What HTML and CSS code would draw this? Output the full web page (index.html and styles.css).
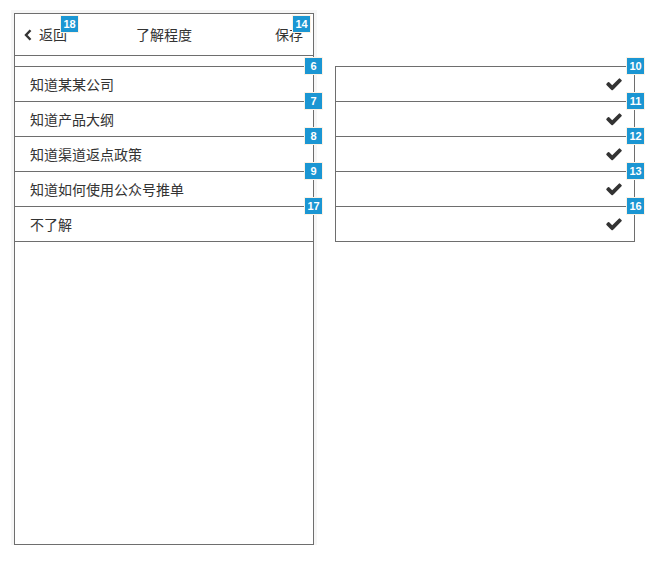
FILE: index.html
```html
<!DOCTYPE html>
<html lang="zh">
<head>
<meta charset="utf-8">
<link rel="stylesheet" href="styles.css">
</head>
<body>
<div class="stage">
  <div class="phone">
    <div class="header">
      <div class="back">
        <svg class="chev" viewBox="0 0 8 12" width="8" height="12"><polyline points="6.5,1.2 2,6 6.5,10.8" fill="none" stroke="#333" stroke-width="2.4"/></svg>
        <span class="tag">返回<span class="badge b-back">18</span></span>
      </div>
      <div class="title">了解程度</div>
      <div class="save"><span class="tag">保存<span class="badge b-save">14</span></span></div>
    </div>
    <ul class="list">
      <li class="row"><span>知道某某公司</span><span class="badge b-row">6</span></li>
      <li class="row"><span>知道产品大纲</span><span class="badge b-row">7</span></li>
      <li class="row"><span>知道渠道返点政策</span><span class="badge b-row">8</span></li>
      <li class="row"><span>知道如何使用公众号推单</span><span class="badge b-row">9</span></li>
      <li class="row"><span>不了解</span><span class="badge b-row">17</span></li>
    </ul>
  </div>
  <ul class="checks">
    <li class="crow"><svg class="check" viewBox="0 0 1792 1792" width="18" height="18"><path d="M1671 566q0 40-28 68l-724 724-136 136q-28 28-68 28t-68-28l-136-136-362-362q-28-28-28-68t28-68l136-136q28-28 68-28t68 28l294 295 656-657q28-28 68-28t68 28l136 136q28 28 28 68z" fill="#333"/></svg><span class="badge b-crow">10</span></li>
    <li class="crow"><svg class="check" viewBox="0 0 1792 1792" width="18" height="18"><path d="M1671 566q0 40-28 68l-724 724-136 136q-28 28-68 28t-68-28l-136-136-362-362q-28-28-28-68t28-68l136-136q28-28 68-28t68 28l294 295 656-657q28-28 68-28t68 28l136 136q28 28 28 68z" fill="#333"/></svg><span class="badge b-crow">11</span></li>
    <li class="crow"><svg class="check" viewBox="0 0 1792 1792" width="18" height="18"><path d="M1671 566q0 40-28 68l-724 724-136 136q-28 28-68 28t-68-28l-136-136-362-362q-28-28-28-68t28-68l136-136q28-28 68-28t68 28l294 295 656-657q28-28 68-28t68 28l136 136q28 28 28 68z" fill="#333"/></svg><span class="badge b-crow">12</span></li>
    <li class="crow"><svg class="check" viewBox="0 0 1792 1792" width="18" height="18"><path d="M1671 566q0 40-28 68l-724 724-136 136q-28 28-68 28t-68-28l-136-136-362-362q-28-28-28-68t28-68l136-136q28-28 68-28t68 28l294 295 656-657q28-28 68-28t68 28l136 136q28 28 28 68z" fill="#333"/></svg><span class="badge b-crow">13</span></li>
    <li class="crow"><svg class="check" viewBox="0 0 1792 1792" width="18" height="18"><path d="M1671 566q0 40-28 68l-724 724-136 136q-28 28-68 28t-68-28l-136-136-362-362q-28-28-28-68t28-68l136-136q28-28 68-28t68 28l294 295 656-657q28-28 68-28t68 28l136 136q28 28 28 68z" fill="#333"/></svg><span class="badge b-crow">16</span></li>
  </ul>
</div>
</body>
</html>
```

FILE: styles.css
```css
* { box-sizing: border-box; }
html, body { margin: 0; padding: 0; background: #fff; }
body {
  font-family: "Noto Sans CJK SC", "Liberation Sans", sans-serif;
  font-size: 14px;
  color: #333;
}
.stage {
  display: flex;
  align-items: flex-start;
  gap: 21px;
  padding: 13px 0 0 14px;
}
.phone {
  position: relative;
  width: 300px;
  height: 532px;
  border: 1px solid #6e6e6e;
  box-shadow: 0 0 0 3px #f6f6f6;
}
.header {
  position: relative;
  height: 42px;
  border-bottom: 1px solid #6e6e6e;
  display: flex;
  align-items: center;
  justify-content: space-between;
  padding: 0 10px 2px 9px;
}
.back {
  display: flex;
  align-items: center;
  gap: 7px;
}
.chev { display: block; margin-top: 2px; }
.tag { position: relative; line-height: 20px; }
.title {
  position: absolute;
  left: 0;
  right: 0;
  top: 10px;
  text-align: center;
  line-height: 20px;
}
.save { position: relative; }
.list {
  list-style: none;
  margin: 10px 0 0 0;
  padding: 0;
  border-top: 1px solid #6e6e6e;
}
.row {
  position: relative;
  height: 35px;
  border-bottom: 1px solid #6e6e6e;
  display: flex;
  align-items: center;
  padding-left: 15px;
}
.checks {
  list-style: none;
  margin: 53px 0 0 0;
  padding: 0;
  width: 300px;
  border: 1px solid #6e6e6e;
}
.crow {
  position: relative;
  height: 35px;
  border-bottom: 1px solid #6e6e6e;
  display: flex;
  align-items: center;
  justify-content: flex-end;
  padding-right: 11px;
}
.crow:last-child { height: 34px; border-bottom: 0; }
.check { display: block; }
.badge {
  position: absolute;
  width: 17px;
  height: 16px;
  background: #1b96d3;
  color: #fff;
  font-family: "Liberation Sans", Arial, sans-serif;
  font-weight: bold;
  font-size: 11px;
  line-height: 16px;
  text-align: center;
  box-shadow: 0 0 0 1px #fdf2e4;
}
.b-back { left: 22px; top: -8px; }
.b-save { left: 18px; top: -8px; }
.b-row { right: -9px; top: -9px; }
.b-crow { right: -10px; top: -9px; }
```
